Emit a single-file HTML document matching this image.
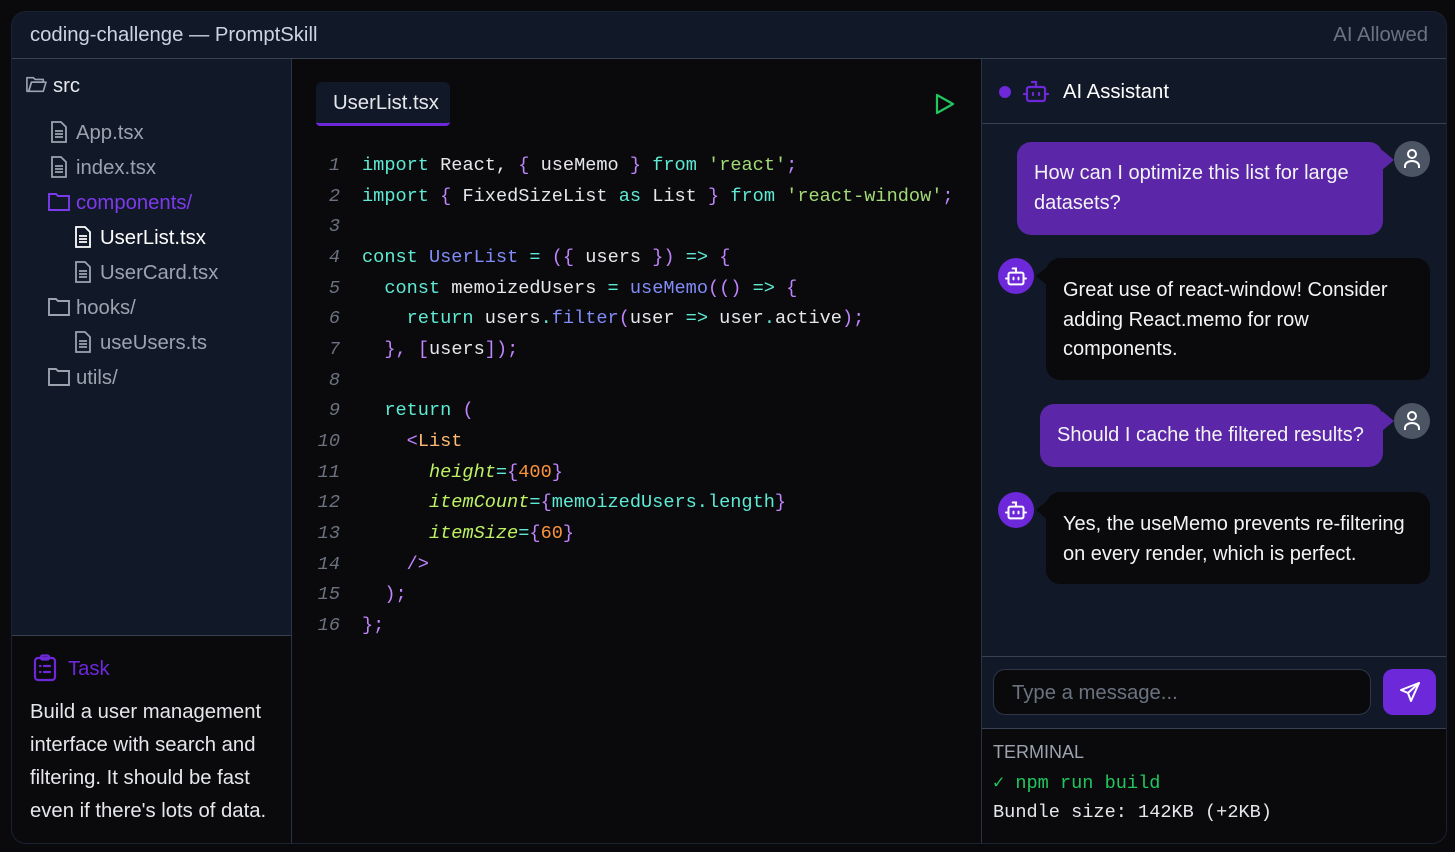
<!DOCTYPE html>
<html><head><meta charset="utf-8"><style>
*{box-sizing:border-box;margin:0;padding:0}
body{width:1455px;height:852px;background:#0a0a0c;font-family:"Liberation Sans",sans-serif;overflow:hidden;position:relative;color:#e5e7eb}
.win{position:absolute;left:12px;top:12px;width:1434px;height:831px;background:#111827;border-radius:14px;box-shadow:0 0 0 1px #1a2233;overflow:hidden}
.abs{position:absolute}
.hdr{left:0;top:0;width:1434px;height:47px;border-bottom:1px solid #374151}
.t{font-size:20.3px;white-space:nowrap}
.side{left:0;top:47px;width:280px;height:784px;border-right:1px solid #2b3444}
.task{left:0;top:623px;width:280px;height:210px;background:#0a0a0c;border-top:1px solid #374151;border-right:1px solid #2b3444}
.ed{left:280px;top:47px;width:689px;height:784px;background:#0a0a0c}
.chat{left:969px;top:47px;width:465px;height:784px;background:#111827;border-left:1px solid #2b3444}
.code{font-family:"Liberation Mono","DejaVu Sans Mono",monospace;font-size:18.6px;white-space:pre;line-height:30.67px}
.ln{color:#6b7280;font-style:italic;text-align:right;width:30px}
.k{color:#5eead4}.i{color:#e5e7eb}.p{color:#c084fc}.s{color:#a3d977}.f{color:#818cf8}.tg{color:#fdba74}.at{color:#bef264;font-style:italic}.n{color:#fb923c}
.bub{position:absolute;font-size:20px;line-height:29.5px;border-radius:14px;color:#f3f4f6}
.u{background:#5b27a8}
.b{background:#0a0a0c}
.av{position:absolute;width:36px;height:36px;border-radius:50%;display:flex;align-items:center;justify-content:center}
</style></head><body>
<div class="win">
 <div class="abs hdr"><div class="abs t" style="left:18px;top:12px;color:#cbd5e1">coding-challenge — PromptSkill</div><div class="abs t" style="right:18px;top:12px;color:#6b7280">AI Allowed</div></div>
 <div class="abs side">
  <svg class="abs" style="left:13px;top:15px" width="22" height="20" viewBox="0 0 24 22" fill="none" stroke="#9ca3af" stroke-width="1.8" stroke-linejoin="round"><path d="M2 4h7l2 2h9v3H7l-3 10H2z"/><path d="M4 19l3-10h16l-3 10z"/></svg>
  <div class="abs t" style="left:41px;top:16px">src</div>
  <svg class="abs" style="left:38px;top:62px" width="18" height="22" viewBox="0 0 18 22" fill="none" stroke="#9ca3af" stroke-width="1.8"><path d="M2 1h9l5 5v15H2z"/><path d="M5 10h8M5 13h8M5 16h8"/></svg>
  <div class="abs t" style="left:64px;top:63px;color:#9ca3af">App.tsx</div>
  <svg class="abs" style="left:38px;top:97px" width="18" height="22" viewBox="0 0 18 22" fill="none" stroke="#9ca3af" stroke-width="1.8"><path d="M2 1h9l5 5v15H2z"/><path d="M5 10h8M5 13h8M5 16h8"/></svg>
  <div class="abs t" style="left:64px;top:98px;color:#9ca3af">index.tsx</div>
  <svg class="abs" style="left:36px;top:133px" width="22" height="19" viewBox="0 0 22 19" fill="none" stroke="#7c3aed" stroke-width="1.9"><path d="M1 2h7l2 2h11v14H1z"/></svg>
  <div class="abs t" style="left:64px;top:133px;color:#7c3aed">components/</div>
  <svg class="abs" style="left:62px;top:167px" width="18" height="22" viewBox="0 0 18 22" fill="none" stroke="#fff" stroke-width="1.8"><path d="M2 1h9l5 5v15H2z"/><path d="M5 10h8M5 13h8M5 16h8"/></svg>
  <div class="abs t" style="left:88px;top:168px;color:#fff">UserList.tsx</div>
  <svg class="abs" style="left:62px;top:202px" width="18" height="22" viewBox="0 0 18 22" fill="none" stroke="#9ca3af" stroke-width="1.8"><path d="M2 1h9l5 5v15H2z"/><path d="M5 10h8M5 13h8M5 16h8"/></svg>
  <div class="abs t" style="left:88px;top:203px;color:#9ca3af">UserCard.tsx</div>
  <svg class="abs" style="left:36px;top:238px" width="22" height="19" viewBox="0 0 22 19" fill="none" stroke="#9ca3af" stroke-width="1.9"><path d="M1 2h7l2 2h11v14H1z"/></svg>
  <div class="abs t" style="left:64px;top:238px;color:#9ca3af">hooks/</div>
  <svg class="abs" style="left:62px;top:272px" width="18" height="22" viewBox="0 0 18 22" fill="none" stroke="#9ca3af" stroke-width="1.8"><path d="M2 1h9l5 5v15H2z"/><path d="M5 10h8M5 13h8M5 16h8"/></svg>
  <div class="abs t" style="left:88px;top:273px;color:#9ca3af">useUsers.ts</div>
  <svg class="abs" style="left:36px;top:308px" width="22" height="19" viewBox="0 0 22 19" fill="none" stroke="#9ca3af" stroke-width="1.9"><path d="M1 2h7l2 2h11v14H1z"/></svg>
  <div class="abs t" style="left:64px;top:308px;color:#9ca3af">utils/</div>
 </div>
 <div class="abs task">
  <svg class="abs" style="left:21px;top:18px" width="24" height="28" viewBox="0 0 24 28" fill="none" stroke="#6d28d9" stroke-width="2.2" stroke-linecap="round"><rect x="2" y="4" width="20" height="22" rx="3"/><rect x="8" y="1.5" width="8" height="4" rx="1.5"/><path d="M7 12h.5M11 12h6M7 18h.5M11 18h6"/></svg>
  <div class="abs t" style="left:56px;top:22px;color:#6d28d9">Task</div>
  <div class="abs" style="left:18px;top:60px;width:255px;font-size:20.3px;line-height:33px;color:#e5e7eb">Build a user management interface with search and filtering. It should be fast even if there's lots of data.</div>
 </div>
 <div class="abs ed">
  <div class="abs" style="left:24px;top:23px;width:134px;height:44px;background:#111827;border-radius:6px 6px 4px 4px;border-bottom:3px solid #6d28d9"></div>
  <div class="abs t" style="left:41px;top:33px;color:#e5e7eb">UserList.tsx</div>
  <svg class="abs" style="left:642px;top:33px" width="22" height="24" viewBox="0 0 22 24" fill="none" stroke="#22c55e" stroke-width="2.2" stroke-linejoin="round"><path d="M3 3l16 9-16 9z"/></svg>
  <div class="abs code ln" style="left:18px;top:92px">1
2
3
4
5
6
7
8
9
10
11
12
13
14
15
16</div>
  <div class="abs code" style="left:70px;top:92px"><span class="k">import</span> <span class="i">React,</span> <span class="p">{</span> <span class="i">useMemo</span> <span class="p">}</span> <span class="k">from</span> <span class="s">'react'</span><span class="p">;</span>
<span class="k">import</span> <span class="p">{</span> <span class="i">FixedSizeList</span> <span class="k">as</span> <span class="i">List</span> <span class="p">}</span> <span class="k">from</span> <span class="s">'react-window'</span><span class="p">;</span>

<span class="k">const</span> <span class="f">UserList</span> <span class="k">=</span> <span class="p">({</span> <span class="i">users</span> <span class="p">})</span> <span class="k">=&gt;</span> <span class="p">{</span>
  <span class="k">const</span> <span class="i">memoizedUsers</span> <span class="k">=</span> <span class="f">useMemo</span><span class="p">(()</span> <span class="k">=&gt;</span> <span class="p">{</span>
    <span class="k">return</span> <span class="i">users</span><span class="k">.</span><span class="f">filter</span><span class="p">(</span><span class="i">user</span> <span class="k">=&gt;</span> <span class="i">user</span><span class="k">.</span><span class="i">active</span><span class="p">);</span>
  <span class="p">},</span> <span class="p">[</span><span class="i">users</span><span class="p">]);</span>

  <span class="k">return</span> <span class="p">(</span>
    <span class="p">&lt;</span><span class="tg">List</span>
      <span class="at">height</span><span class="k">=</span><span class="p">{</span><span class="n">400</span><span class="p">}</span>
      <span class="at">itemCount</span><span class="k">=</span><span class="p">{</span><span class="k">memoizedUsers.length</span><span class="p">}</span>
      <span class="at">itemSize</span><span class="k">=</span><span class="p">{</span><span class="n">60</span><span class="p">}</span>
    <span class="p">/&gt;</span>
  <span class="p">);</span>
<span class="p">};</span></div>
 </div>
 <div class="abs chat">
  <div class="abs" style="left:0;top:0;width:465px;height:65px;border-bottom:1px solid #374151"></div>
  <div class="abs" style="left:17px;top:27px;width:12px;height:12px;border-radius:50%;background:#6d28d9"></div>
  <svg class="abs" style="left:41px;top:20px" width="26" height="24" viewBox="0 0 26 24" fill="none" stroke="#6d28d9" stroke-width="2.2" stroke-linecap="round"><rect x="4" y="8" width="18" height="14" rx="2"/><path d="M13 8V3H9M1 15h3M22 15h3M10 14v2M16 14v2"/></svg>
  <div class="abs t" style="left:81px;top:22px;color:#fff">AI Assistant</div>

  <div class="bub u" style="left:35px;top:83px;width:366px;height:93px;padding:17px 17px">How can I optimize this list for large datasets?</div>
  <div class="abs" style="left:400px;top:91px;width:0;height:0;border-top:10px solid transparent;border-bottom:10px solid transparent;border-left:12px solid #5b27a8"></div>
  <div class="av" style="left:412px;top:82px;background:#4b5563"><svg width="20" height="22" viewBox="0 0 20 22" fill="none" stroke="#fff" stroke-width="2"><circle cx="10" cy="6" r="4"/><path d="M3 20v-2a7 5 0 0 1 14 0v2"/></svg></div>

  <div class="av" style="left:16px;top:199px;background:#6d28d9"><svg width="22" height="20" viewBox="0 0 26 24" fill="none" stroke="#fff" stroke-width="2.4" stroke-linecap="round"><rect x="4" y="8" width="18" height="14" rx="2"/><path d="M13 8V3H9M1 15h3M22 15h3M10 14v2M16 14v2"/></svg></div>
  <div class="abs" style="left:54px;top:207px;width:0;height:0;border-top:10px solid transparent;border-bottom:10px solid transparent;border-right:12px solid #0a0a0c"></div>
  <div class="bub b" style="left:64px;top:199px;width:384px;height:122px;padding:18px 17px">Great use of react-window! Consider adding React.memo for row components.</div>

  <div class="bub u" style="left:58px;top:345px;width:343px;height:63px;padding:17px 17px;white-space:nowrap">Should I cache the filtered results?</div>
  <div class="abs" style="left:400px;top:352px;width:0;height:0;border-top:10px solid transparent;border-bottom:10px solid transparent;border-left:12px solid #5b27a8"></div>
  <div class="av" style="left:412px;top:344px;background:#4b5563"><svg width="20" height="22" viewBox="0 0 20 22" fill="none" stroke="#fff" stroke-width="2"><circle cx="10" cy="6" r="4"/><path d="M3 20v-2a7 5 0 0 1 14 0v2"/></svg></div>

  <div class="av" style="left:16px;top:433px;background:#6d28d9"><svg width="22" height="20" viewBox="0 0 26 24" fill="none" stroke="#fff" stroke-width="2.4" stroke-linecap="round"><rect x="4" y="8" width="18" height="14" rx="2"/><path d="M13 8V3H9M1 15h3M22 15h3M10 14v2M16 14v2"/></svg></div>
  <div class="abs" style="left:54px;top:441px;width:0;height:0;border-top:10px solid transparent;border-bottom:10px solid transparent;border-right:12px solid #0a0a0c"></div>
  <div class="bub b" style="left:64px;top:433px;width:384px;height:92px;padding:18px 17px">Yes, the useMemo prevents re-filtering on every render, which is perfect.</div>

  <div class="abs" style="left:0;top:597px;width:465px;height:1px;background:#374151"></div>
  <div class="abs" style="left:11px;top:610px;width:378px;height:46px;border:1px solid #2d3748;border-radius:12px;background:#0a0a0c"></div>
  <div class="abs t" style="left:30px;top:623px;color:#6b7280">Type a message...</div>
  <div class="abs" style="left:401px;top:610px;width:53px;height:46px;border-radius:10px;background:#6d28d9;display:flex;align-items:center;justify-content:center"><svg width="24" height="24" viewBox="0 0 24 24" fill="none" stroke="#fff" stroke-width="2" stroke-linejoin="round" stroke-linecap="round"><path d="M21 3L3 10l7 3 3 8z"/><path d="M21 3L10 13"/></svg></div>

  <div class="abs" style="left:0;top:669px;width:465px;height:115px;background:#0a0a0c;border-top:1px solid #374151"></div>
  <div class="abs" style="left:11px;top:683px;font-size:18px;color:#9ca3af">TERMINAL</div>
  <div class="abs code" style="left:11px;top:710px;color:#22c55e;font-size:18.6px">✓ npm run build</div>
  <div class="abs code" style="left:11px;top:739px;color:#e5e7eb;font-size:18.6px">Bundle size: 142KB (+2KB)</div>
 </div>
</div>
</body></html>
